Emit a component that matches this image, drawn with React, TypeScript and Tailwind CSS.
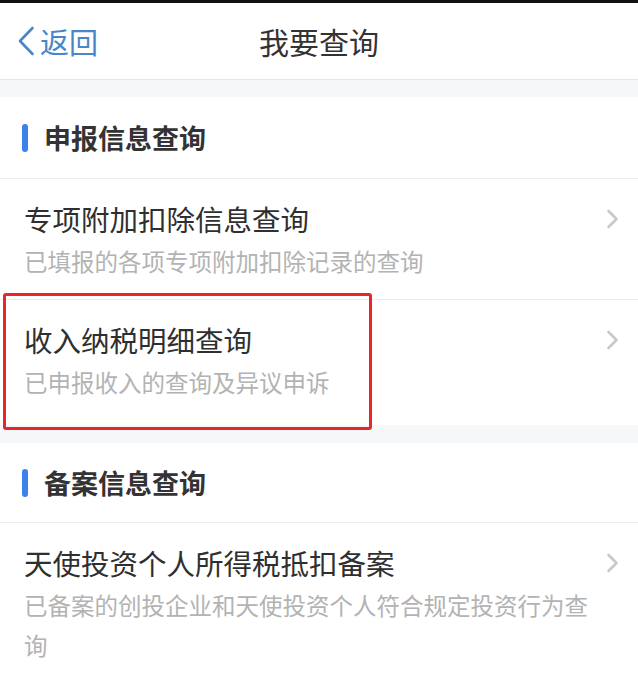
import React from "react";

const font = { fontFamily: '"Noto Sans CJK SC", "Noto Sans", sans-serif' };

function Chevron() {
  return (
    <svg width="13" height="20" viewBox="0 0 13 20" className="shrink-0">
      <path d="M2.5 2 L10.5 10 L2.5 18" fill="none" stroke="#c9c9cc" strokeWidth="2.6" strokeLinecap="round" strokeLinejoin="round" />
    </svg>
  );
}

function SectionHeader({ title, h }: { title: string; h: string }) {
  return (
    <div className={"flex items-center border-b border-[#ececee] bg-white " + h}>
      <div className="ml-[22px] w-[6px] h-[28px] rounded-full bg-[#3d82ea]" />
      <div className="ml-[16px] text-[27px] font-bold text-[#333333] leading-none">{title}</div>
    </div>
  );
}

function Item({ title, sub, last, highlight, pb }: { title: string; sub: string; last?: boolean; highlight?: boolean; pb: string }) {
  return (
    <div className={"relative bg-white pl-[24px] pr-[19px] pt-[20px] " + pb + " " + (last ? "" : "border-b border-[#ececee]")}>
      <div className="flex items-center justify-between h-[40px]">
        <div className="text-[28.5px] leading-[40px] text-[#2f2f2f]">{title}</div>
        <Chevron />
      </div>
      <div className="mt-[2px] mr-[20px] text-[23.5px] leading-[40px] text-[#b3b3b3]">{sub}</div>
      {highlight && (
        <div className="absolute left-[3px] top-[-7px] w-[369px] h-[137px] border-[3px] border-[#e5262b] rounded-[3px]" />
      )}
    </div>
  );
}

export default function App() {
  return (
    <div className="w-[638px] h-[677px] overflow-hidden bg-[#f6f7f9]" style={font}>
      <div className="h-[3px] bg-[#111111]" />
      <div className="relative h-[77px] bg-white border-b border-[#e6e6e8] flex items-center justify-center">
        <div className="absolute left-[17px] top-0 h-full flex items-center">
          <svg width="18" height="30" viewBox="0 0 18 30">
            <path d="M15.5 2 L3 15 L15.5 28" fill="none" stroke="#4a85c9" strokeWidth="2.6" strokeLinecap="round" strokeLinejoin="round" />
          </svg>
          <span className="ml-[5px] text-[29px] leading-none text-[#4a85c9]">返回</span>
        </div>
        <div className="text-[30px] leading-none text-[#333333]">我要查询</div>
      </div>
      <div className="h-[17px]" />
      <SectionHeader title="申报信息查询" h="h-[82px]" />
      <Item title="专项附加扣除信息查询" sub="已填报的各项专项附加扣除记录的查询" pb="pb-[18px]" />
      <Item title="收入纳税明细查询" sub="已申报收入的查询及异议申诉" last highlight pb="pb-[23px]" />
      <div className="h-[18px]" />
      <SectionHeader title="备案信息查询" h="h-[80px]" />
      <Item title="天使投资个人所得税抵扣备案" sub="已备案的创投企业和天使投资个人符合规定投资行为查询" last pb="pb-[18px]" />
    </div>
  );
}
